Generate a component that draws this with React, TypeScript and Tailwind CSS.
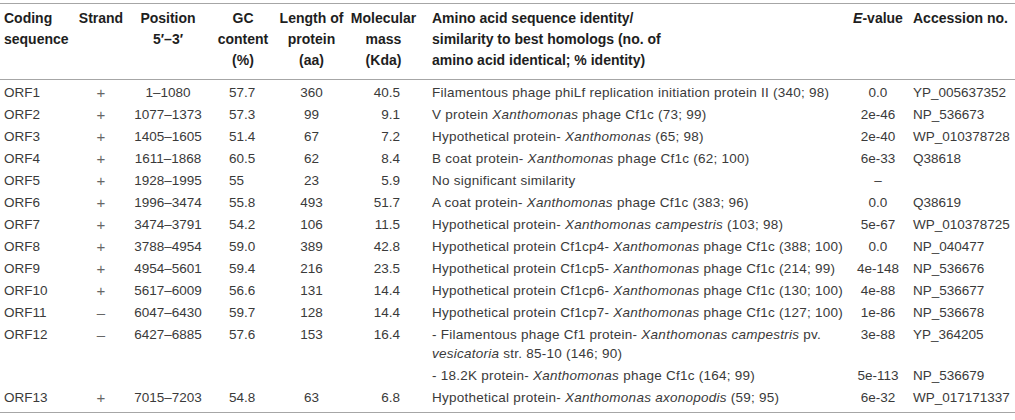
import type { ReactNode } from "react";

type Row = {
  id: string;
  strand: string;
  position: string;
  gc: string;
  length: string;
  mass: string;
  homolog: ReactNode;
  evalue: string;
  accession: string;
};

const X = ({ children }: { children: ReactNode }) => <i>{children}</i>;

const rows: Row[] = [
  {
    id: "ORF1",
    strand: "+",
    position: "1–1080",
    gc: "57.7",
    length: "360",
    mass: "40.5",
    homolog: "Filamentous phage phiLf replication initiation protein II (340; 98)",
    evalue: "0.0",
    accession: "YP_005637352",
  },
  {
    id: "ORF2",
    strand: "+",
    position: "1077–1373",
    gc: "57.3",
    length: "99",
    mass: "9.1",
    homolog: (
      <>
        V protein <X>Xanthomonas</X> phage Cf1c (73; 99)
      </>
    ),
    evalue: "2e-46",
    accession: "NP_536673",
  },
  {
    id: "ORF3",
    strand: "+",
    position: "1405–1605",
    gc: "51.4",
    length: "67",
    mass: "7.2",
    homolog: (
      <>
        Hypothetical protein- <X>Xanthomonas</X> (65; 98)
      </>
    ),
    evalue: "2e-40",
    accession: "WP_010378728",
  },
  {
    id: "ORF4",
    strand: "+",
    position: "1611–1868",
    gc: "60.5",
    length: "62",
    mass: "8.4",
    homolog: (
      <>
        B coat protein- <X>Xanthomonas</X> phage Cf1c (62; 100)
      </>
    ),
    evalue: "6e-33",
    accession: "Q38618",
  },
  {
    id: "ORF5",
    strand: "+",
    position: "1928–1995",
    gc: "55",
    length: "23",
    mass: "5.9",
    homolog: "No significant similarity",
    evalue: "–",
    accession: "",
  },
  {
    id: "ORF6",
    strand: "+",
    position: "1996–3474",
    gc: "55.8",
    length: "493",
    mass: "51.7",
    homolog: (
      <>
        A coat protein- <X>Xanthomonas</X> phage Cf1c (383; 96)
      </>
    ),
    evalue: "0.0",
    accession: "Q38619",
  },
  {
    id: "ORF7",
    strand: "+",
    position: "3474–3791",
    gc: "54.2",
    length: "106",
    mass: "11.5",
    homolog: (
      <>
        Hypothetical protein- <X>Xanthomonas campestris</X> (103; 98)
      </>
    ),
    evalue: "5e-67",
    accession: "WP_010378725",
  },
  {
    id: "ORF8",
    strand: "+",
    position: "3788–4954",
    gc: "59.0",
    length: "389",
    mass: "42.8",
    homolog: (
      <>
        Hypothetical protein Cf1cp4- <X>Xanthomonas</X> phage Cf1c (388; 100)
      </>
    ),
    evalue: "0.0",
    accession: "NP_040477",
  },
  {
    id: "ORF9",
    strand: "+",
    position: "4954–5601",
    gc: "59.4",
    length: "216",
    mass: "23.5",
    homolog: (
      <>
        Hypothetical protein Cf1cp5- <X>Xanthomonas</X> phage Cf1c (214; 99)
      </>
    ),
    evalue: "4e-148",
    accession: "NP_536676",
  },
  {
    id: "ORF10",
    strand: "+",
    position: "5617–6009",
    gc: "56.6",
    length: "131",
    mass: "14.4",
    homolog: (
      <>
        Hypothetical protein Cf1cp6- <X>Xanthomonas</X> phage Cf1c (130; 100)
      </>
    ),
    evalue: "4e-88",
    accession: "NP_536677",
  },
  {
    id: "ORF11",
    strand: "–",
    position: "6047–6430",
    gc: "59.7",
    length: "128",
    mass: "14.4",
    homolog: (
      <>
        Hypothetical protein Cf1cp7- <X>Xanthomonas</X> phage Cf1c (127; 100)
      </>
    ),
    evalue: "1e-86",
    accession: "NP_536678",
  },
];

const cell = "py-[1.5px] align-top whitespace-nowrap";
const idCell = `${cell} pl-[4px]`;
const strandCell = `${cell} text-center text-[15px] text-[#666]`;
const centerCell = `${cell} text-center`;
const gcCell = `${cell} pl-[21px]`;
const massCell = `${cell} text-right pr-[22px]`;
const homologCell = `${cell} pl-[10px] tracking-[0.25px]`;
const evalueCell = `${cell} text-center`;
const accCell = `${cell} pl-[5px]`;

function DataRow({ row }: { row: Row }) {
  return (
    <tr>
      <td className={idCell}>{row.id}</td>
      <td className={strandCell}>{row.strand}</td>
      <td className={centerCell}>{row.position}</td>
      <td className={gcCell}>{row.gc}</td>
      <td className={centerCell}>{row.length}</td>
      <td className={massCell}>{row.mass}</td>
      <td className={homologCell}>{row.homolog}</td>
      <td className={evalueCell}>{row.evalue}</td>
      <td className={accCell}>{row.accession}</td>
    </tr>
  );
}

const th = "pt-[4px] pb-[8px] align-top font-bold whitespace-nowrap";

export default function App() {
  return (
    <div className="w-[1015px] h-[420px] bg-white pt-[3px] font-['Liberation_Sans',Arial,sans-serif] text-[13.5px] text-[#3a3a3a]">
      <table className="w-[1015px] table-fixed border-collapse">
        <colgroup>
          <col className="w-[74px]" />
          <col className="w-[54px]" />
          <col className="w-[80px]" />
          <col className="w-[70px]" />
          <col className="w-[67px]" />
          <col className="w-[77px]" />
          <col className="w-[426px]" />
          <col className="w-[60px]" />
          <col className="w-[107px]" />
        </colgroup>
        <thead className="text-[14px] text-[#1e1e1e] leading-[21px]">
          <tr className="border-t border-b border-[#a6a6a6]">
            <th className={`${th} pl-[4px] text-left`}>
              Coding
              <br />
              sequence
            </th>
            <th className={`${th} text-center`}>Strand</th>
            <th className={`${th} text-center`}>
              Position
              <br />
              5′–3′
            </th>
            <th className={`${th} text-center`}>
              GC
              <br />
              content
              <br />
              (%)
            </th>
            <th className={`${th} text-center`}>
              Length of
              <br />
              protein
              <br />
              (aa)
            </th>
            <th className={`${th} text-center`}>
              Molecular
              <br />
              mass
              <br />
              (Kda)
            </th>
            <th className={`${th} pl-[10px] text-left`}>
              Amino acid sequence identity/
              <br />
              similarity to best homologs (no. of
              <br />
              amino acid identical; % identity)
            </th>
            <th className={`${th} text-center`}>
              <i>E</i>-value
            </th>
            <th className={`${th} pl-[5px] text-left`}>Accession no.</th>
          </tr>
        </thead>
        <tbody className="leading-[19px]">
          <tr>
            <td colSpan={9} className="h-[2px] p-0" />
          </tr>
          {rows.map((row) => (
            <DataRow key={row.id} row={row} />
          ))}
          <tr>
            <td rowSpan={2} className={idCell}>ORF12</td>
            <td rowSpan={2} className={strandCell}>–</td>
            <td rowSpan={2} className={centerCell}>6427–6885</td>
            <td rowSpan={2} className={gcCell}>57.6</td>
            <td rowSpan={2} className={centerCell}>153</td>
            <td rowSpan={2} className={massCell}>16.4</td>
            <td className={homologCell}>
              - Filamentous phage Cf1 protein- <X>Xanthomonas campestris</X> pv.
              <br />
              <X>vesicatoria</X> str. 85-10 (146; 90)
            </td>
            <td className={evalueCell}>3e-88</td>
            <td className={accCell}>YP_364205</td>
          </tr>
          <tr>
            <td className={homologCell}>
              - 18.2K protein- <X>Xanthomonas</X> phage Cf1c (164; 99)
            </td>
            <td className={evalueCell}>5e-113</td>
            <td className={accCell}>NP_536679</td>
          </tr>
          <tr className="border-b border-[#a6a6a6]">
            <td className={`${idCell} pb-[5px]`}>ORF13</td>
            <td className={`${strandCell} pb-[5px]`}>+</td>
            <td className={`${centerCell} pb-[5px]`}>7015–7203</td>
            <td className={`${gcCell} pb-[5px]`}>54.8</td>
            <td className={`${centerCell} pb-[5px]`}>63</td>
            <td className={`${massCell} pb-[5px]`}>6.8</td>
            <td className={`${homologCell} pb-[5px]`}>
              Hypothetical protein- <X>Xanthomonas axonopodis</X> (59; 95)
            </td>
            <td className={`${evalueCell} pb-[5px]`}>6e-32</td>
            <td className={`${accCell} pb-[5px]`}>WP_017171337</td>
          </tr>
        </tbody>
      </table>
    </div>
  );
}
